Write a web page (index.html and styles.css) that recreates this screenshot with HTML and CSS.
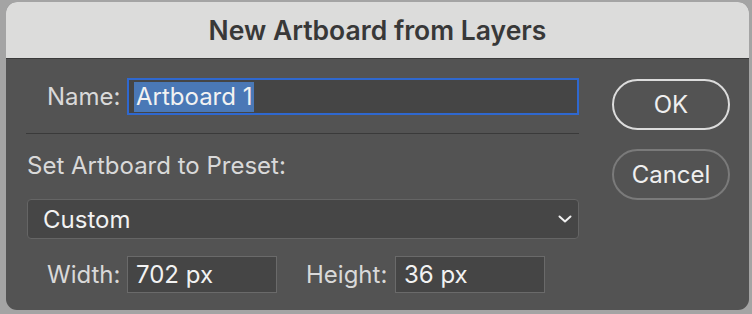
FILE: index.html
```html
<!DOCTYPE html>
<html>
<head>
<meta charset="utf-8">
<link rel="stylesheet" href="styles.css">
</head>
<body>
<div class="dialog">
  <div class="titlebar">New Artboard from Layers</div>
  <div class="content">
    <div class="main">
      <div class="row name-row">
        <span class="label">Name:</span>
        <div class="field name-field"><span class="sel">Artboard 1</span></div>
      </div>
      <div class="sep"></div>
      <div class="preset-label">Set Artboard to Preset:</div>
      <div class="select">
        <span>Custom</span>
        <svg class="chev" width="14" height="8" viewBox="0 0 14 8"><path d="M1.5 1.5 L7 6.5 L12.5 1.5" fill="none" stroke="#f0f0f0" stroke-width="2" stroke-linecap="round" stroke-linejoin="round"/></svg>
      </div>
      <div class="row size-row">
        <span class="label">Width:</span>
        <div class="field small">702 px</div>
        <span class="label height-label">Height:</span>
        <div class="field small">36 px</div>
      </div>
    </div>
    <div class="buttons">
      <div class="btn ok">OK</div>
      <div class="btn cancel">Cancel</div>
    </div>
  </div>
</div>
</body>
</html>
```
FILE: styles.css
```css
html, body {
  margin: 0;
  padding: 0;
}
body {
  width: 752px;
  height: 314px;
  background: #a4a4a4;
  font-family: "Inter", "Liberation Sans", sans-serif;
  overflow: hidden;
}
.dialog {
  margin: 2px 3px 0 6px;
  width: 743px;
  height: 308px;
  border-radius: 11px;
  overflow: hidden;
  background: #535353;
  display: flex;
  flex-direction: column;
}
.titlebar {
  height: 56px;
  flex: none;
  background: #dcdcdb;
  border-bottom: 1px solid #3a3a3a;
  color: #383838;
  font-weight: 600;
  font-size: 26.5px;
  display: flex;
  align-items: center;
  justify-content: center;
}
.content {
  display: flex;
  padding: 19px 0 0 20px;
  gap: 33px;
}
.main {
  width: 553px;
  display: flex;
  flex-direction: column;
}
.row {
  display: flex;
  align-items: center;
}
.label {
  color: #d9d9d9;
  font-size: 24px;
}
.name-row {
  height: 37px;
  padding-left: 21px;
}
.name-row .label {
  margin-right: auto;
}
.field {
  box-sizing: border-box;
  background: #454545;
  color: #f2f2f2;
  font-size: 24px;
  display: flex;
  align-items: center;
}
.name-field {
  width: 452px;
  height: 37px;
  border: 2px solid #2f68cf;
  padding-left: 5px;
}
.sel {
  background: #4a78b6;
  height: 30px;
  display: flex;
  align-items: center;
  padding: 0 2px;
}
.sep {
  height: 1px;
  background: #3a3a3a;
  margin-top: 18px;
}
.preset-label {
  color: #d9d9d9;
  font-size: 24px;
  line-height: 26px;
  margin-top: 19px;
  padding-left: 1px;
}
.select {
  box-sizing: border-box;
  margin: 20px 0 0 1px;
  height: 40px;
  border: 1px solid #656565;
  border-radius: 4px;
  background: #464646;
  color: #f2f2f2;
  font-size: 24px;
  display: flex;
  align-items: center;
  justify-content: space-between;
  padding: 0 6px 0 15px;
}
.chev {
  display: block;
}
.size-row {
  margin-top: 17px;
  height: 37px;
  padding-left: 21px;
}
.size-row .label {
  width: 80px;
}
.size-row .height-label {
  width: 89px;
  margin-left: 29px;
}
.field.small {
  width: 150px;
  height: 37px;
  border: 1px solid #6a6a6a;
  padding-left: 8px;
}
.buttons {
  display: flex;
  flex-direction: column;
  gap: 19px;
  padding-top: 1px;
}
.btn {
  box-sizing: border-box;
  width: 118px;
  height: 51px;
  border-radius: 26px;
  color: #efefef;
  font-size: 24px;
  display: flex;
  align-items: center;
  justify-content: center;
}
.ok {
  border: 2px solid #dcdcdc;
}
.cancel {
  border: 2px solid #7a7a7a;
}
```
